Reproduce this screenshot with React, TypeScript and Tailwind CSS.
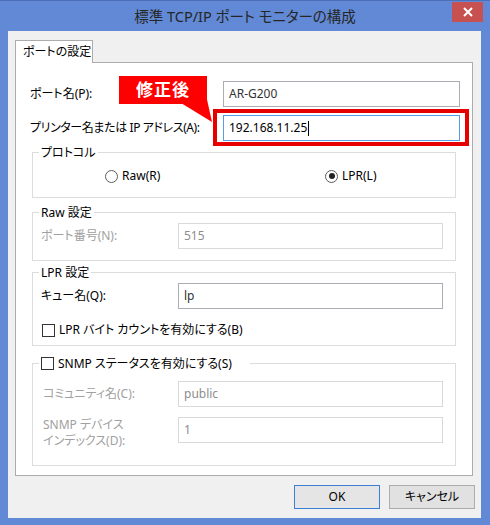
import React from "react";

const font = "font-['Noto_Sans','Noto_Sans_CJK_JP',sans-serif] [font-feature-settings:'palt']";

type BoxProps = {
  value: string;
  disabled?: boolean;
  focused?: boolean;
  width: string;
};

function TextBox({ value, disabled, focused, width }: BoxProps) {
  let tone = "border-[#abadb3] text-[#333]";
  if (focused) tone = "border-[#569de5] text-black";
  if (disabled) tone = "border-[#d9d9d9] text-[#8d8d8d]";
  return (
    <div className={`flex h-[26px] items-center border bg-white px-[5px] text-[12px] ${width} ${tone}`}>
      <span>{value}</span>
      {focused && <span className="ml-[1px] h-[15px] w-[1px] bg-black" />}
    </div>
  );
}

function GroupBox({ legend, className, children }: { legend: React.ReactNode; className: string; children: React.ReactNode }) {
  return (
    <div className={`mx-[16px] border border-[#dcdcdc] ${className}`}>
      <div className="-mt-[9px] ml-[6px] flex h-[17px] w-fit items-center bg-white px-[2px] text-[12px] text-black">
        {legend}
      </div>
      {children}
    </div>
  );
}

function Radio({ label, checked }: { label: string; checked?: boolean }) {
  return (
    <div className="flex h-[16px] items-center gap-[4px]">
      <span className="flex h-[13px] w-[13px] items-center justify-center rounded-full border border-[#5c5c5c] bg-white">
        {checked && <span className="h-[6px] w-[6px] rounded-full bg-[#222]" />}
      </span>
      <span>{label}</span>
    </div>
  );
}

function Check({ label }: { label: string }) {
  return (
    <div className="flex h-[16px] items-center gap-[4px]">
      <span className="h-[13px] w-[13px] border border-[#333] bg-white" />
      <span>{label}</span>
    </div>
  );
}

export default function App() {
  return (
    <div className={`relative h-[525px] w-[490px] overflow-hidden bg-[#6189d5] ${font}`}>
      {/* title bar */}
      <div className="relative flex h-[31px] items-center justify-center border-t border-[#4d6fb8] pt-[2px]">
        <span className="text-[14.5px] text-[#262626]">標準 TCP/IP ポート モニターの構成</span>
        <div className="absolute right-[7px] top-[1px] flex h-[20px] w-[31px] items-center justify-center bg-[#c75050]">
          <svg width="10" height="10" viewBox="0 0 10 10">
            <path d="M1 1 L9 9 M9 1 L1 9" stroke="white" strokeWidth="2" />
          </svg>
        </div>
      </div>

      {/* client */}
      <div className="ml-[8px] h-[487px] w-[473px] bg-[#f0f0f0] pl-[7px] pt-[9px] text-[12px] text-black">
        <div className="relative z-10 -mb-[1px] flex h-[23px] w-[78px] items-center border border-b-0 border-[#acacac] bg-white pl-[7px]">
          ポートの設定
        </div>
        <div className="h-[414px] w-[458px] border border-[#acacac] bg-white">
          <div className="mt-[18px] flex items-center pl-[14px]">
            <span className="w-[193px]">ポート名(P):</span>
            <TextBox value="AR-G200" width="w-[237px]" />
          </div>
          <div className="mt-[8px] flex items-center pl-[14px]">
            <span className="w-[193px] tracking-[-0.4px]">プリンター名または IP アドレス(A):</span>
            <TextBox value="192.168.11.25" width="w-[237px]" focused />
          </div>

          <GroupBox legend="プロトコル" className="mt-[11px] pb-[13px]">
            <div className="mt-[7px] flex pl-[72px]">
              <div className="w-[220px]">
                <Radio label="Raw(R)" />
              </div>
              <Radio label="LPR(L)" checked />
            </div>
          </GroupBox>

          <GroupBox legend="Raw 設定" className="mt-[14px] pb-[11px]">
            <div className="mt-[2px] flex items-center pl-[8px]">
              <span className="w-[137px] text-[#a0a0a0]">ポート番号(N):</span>
              <TextBox value="515" width="w-[265px]" disabled />
            </div>
          </GroupBox>

          <GroupBox legend="LPR 設定" className="mt-[11px] pb-[7px]">
            <div className="mt-[2px] flex items-center pl-[8px]">
              <span className="w-[137px]">キュー名(Q):</span>
              <TextBox value="lp" width="w-[265px]" />
            </div>
            <div className="mt-[13px] pl-[9px]">
              <Check label="LPR バイト カウントを有効にする(B)" />
            </div>
          </GroupBox>

          <GroupBox
            legend={
              <div className="pr-[16px]">
                <Check label="SNMP ステータスを有効にする(S)" />
              </div>
            }
            className="mt-[17px] pb-[16px]"
          >
            <div className="mt-[9px] flex items-center pl-[10px]">
              <span className="w-[135px] text-[#a0a0a0]">コミュニティ名(C):</span>
              <TextBox value="public" width="w-[265px]" disabled />
            </div>
            <div className="mt-[10px] flex items-start pl-[10px]">
              <div className="flex w-[135px] flex-col leading-[16px] text-[#a0a0a0]">
                <span>SNMP デバイス</span>
                <span>インデックス(D):</span>
              </div>
              <TextBox value="1" width="w-[265px]" disabled />
            </div>
          </GroupBox>
        </div>

        <div className="mt-[9px] flex justify-end gap-[9px] pr-[6px]">
          <button className="h-[24px] w-[86px] border border-[#3c7fd4] bg-[#e5e5e5] text-[12px]">OK</button>
          <button className="h-[24px] w-[86px] border border-[#acacac] bg-[#e1e1e1] text-[12px]">キャンセル</button>
        </div>
      </div>

      {/* annotation */}
      <div className="absolute left-[213px] top-[109px] h-[37px] w-[256px] border-4 border-[#e60000]" />
      <svg className="absolute left-[119px] top-[76px]" width="95" height="48" viewBox="0 0 95 48">
        <rect x="0" y="0" width="88" height="28" fill="#ff0000" />
        <polygon points="62,27 87,19 93,46" fill="#ff0000" />
      </svg>
      <div className="absolute left-[119px] top-[76px] flex h-[28px] w-[88px] items-center justify-center text-[17px] font-bold tracking-[1px] text-white">
        修正後
      </div>
    </div>
  );
}
